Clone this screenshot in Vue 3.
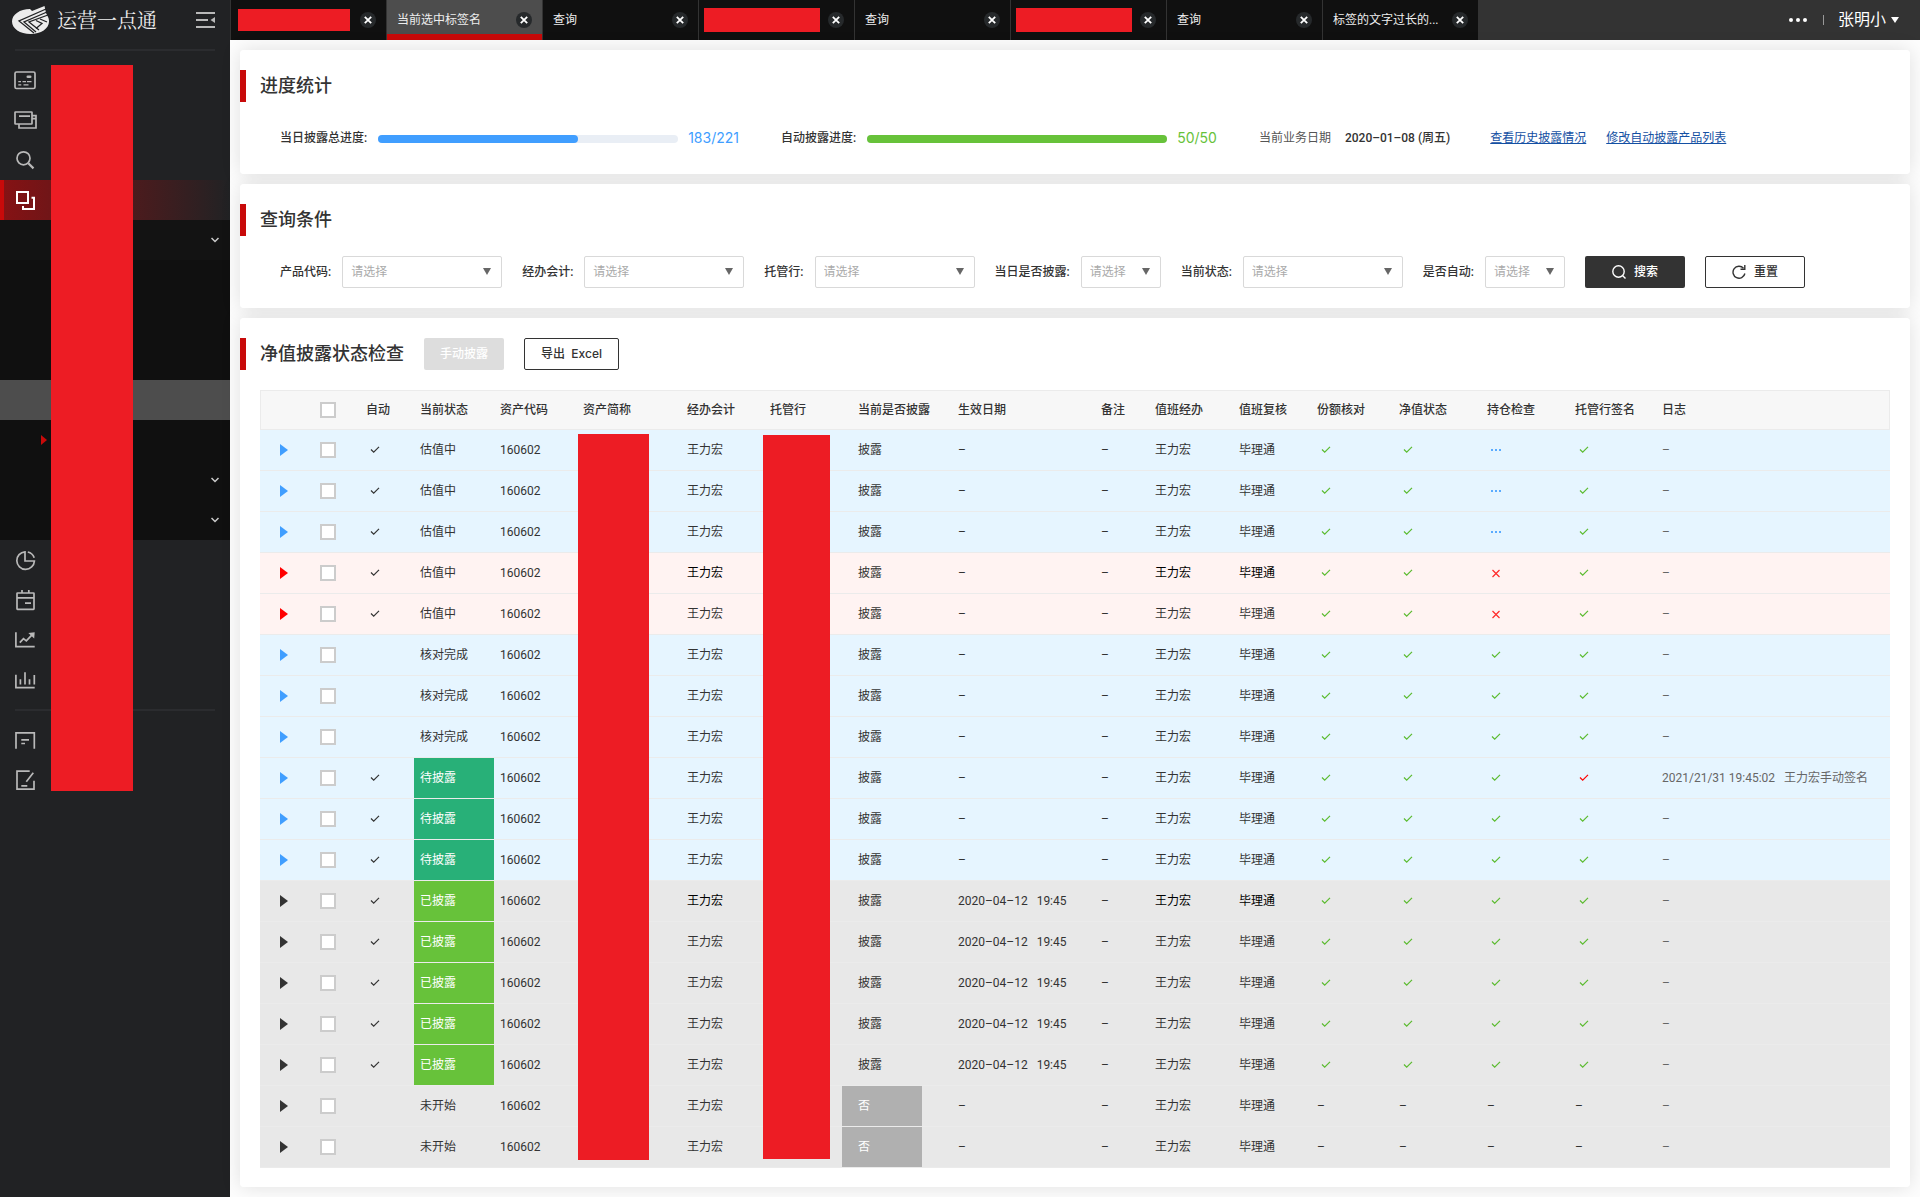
<script setup>
const tabs = [
  { redacted: 'w-first' },
  { label: '当前选中标签名', active: true },
  { label: '查询' },
  { redacted: 'w-wide' },
  { label: '查询' },
  { redacted: 'w-wide' },
  { label: '查询' },
  { label: '标签的文字过长的...' },
]

const filters = [
  { id: 'product', label: '产品代码:' },
  { id: 'accountant', label: '经办会计:' },
  { id: 'bank', label: '托管行:' },
  { id: 'disclosed', label: '当日是否披露:', short: true },
  { id: 'status', label: '当前状态:' },
  { id: 'auto', label: '是否自动:', short: true },
]

const checkColumns = ['share', 'nav', 'hold', 'sign']

function row(tone, status, extra = {}) {
  return {
    tone,
    status,
    auto: true,
    statusTone: '',
    strong: false,
    disclosed: '披露',
    date: '–',
    share: 'ok',
    nav: 'ok',
    hold: 'ok',
    sign: 'ok',
    log: '–',
    ...extra,
  }
}

const published = { statusTone: 'done', date: '2020–04–12\u00a0\u00a0\u00a019:45' }
const waiting = { statusTone: 'wait' }
const idle = { auto: false, disclosed: '否', share: 'none', nav: 'none', hold: 'none', sign: 'none' }

const rows = [
  row('blue', '估值中', { hold: 'pending' }),
  row('blue', '估值中', { hold: 'pending' }),
  row('blue', '估值中', { hold: 'pending' }),
  row('pink', '估值中', { hold: 'fail', strong: true }),
  row('pink', '估值中', { hold: 'fail' }),
  row('blue', '核对完成', { auto: false }),
  row('blue', '核对完成', { auto: false }),
  row('blue', '核对完成', { auto: false }),
  row('blue', '待披露', { ...waiting, sign: 'manual', log: '2021/21/31 19:45:02\u00a0\u00a0\u00a0王力宏手动签名' }),
  row('blue', '待披露', waiting),
  row('blue', '待披露', waiting),
  row('gray', '已披露', { ...published, strong: true }),
  row('gray', '已披露', published),
  row('gray', '已披露', published),
  row('gray', '已披露', published),
  row('gray', '已披露', published),
  row('gray', '未开始', idle),
  row('gray', '未开始', idle),
]
</script>

<template>
  <div class="app">
    <aside class="sidebar">
      <div class="brand">
        <svg class="logo" width="38" height="30" viewBox="0 0 38 30" aria-hidden="true">
          <path d="M18 4C8 4 0 9.500 0 16.500S8 29 18.500 29 37 23.500 37 16.500c0-2-.5-4-1.500-5.500L34 8 32.500 1 20 6z" fill="#ececec" />
          <g fill="none" stroke="#212224" stroke-width="1.300">
            <path d="M34 4L7 16l15 12" />
            <path d="M35 7L12 17l12 10" />
            <path d="M36 10L17 17l10 8" />
            <path d="M24 15.500l6 3-6 5M28 14l7 3" />
          </g>
        </svg>
        <span class="brand-name">运营一点通</span>
        <button class="collapse" type="button" aria-label="收起菜单">
          <svg width="20" height="16" viewBox="0 0 20 16">
            <path d="M0 1h19M0 8h12M0 15h19" fill="none" stroke="#b9b9b9" stroke-width="2" />
            <path d="M14.500 8l4.500-3v6z" fill="#b9b9b9" />
          </svg>
        </button>
      </div>
      <hr class="divider" />
      <nav class="menu">
        <a class="item" href="#" aria-label="卡片">
          <svg class="icon" viewBox="0 0 30 30">
            <rect x="5" y="7" width="20" height="16.500" rx="1.500" />
            <path d="M8.300 16.700H11M12.500 16.700H16M17 16.700h4.500M8.300 19.800h3M13.500 19.800h5" stroke-width="1.300" />
            <rect class="solid" x="16.500" y="10.500" width="5" height="2.600" rx="1.300" />
          </svg>
        </a>
        <a class="item" href="#" aria-label="窗口">
          <svg class="icon" viewBox="0 0 30 30">
            <rect x="5" y="7" width="17" height="12" rx=".5" />
            <path d="M9 11.200h11M9 19v4h17V10.700h-4M22 13.700h4" />
          </svg>
        </a>
        <a class="item" href="#" aria-label="搜索">
          <svg class="icon" viewBox="0 0 30 30">
            <circle cx="13.500" cy="13.300" r="6.500" />
            <path d="M18.300 18.200l5.200 5.200" stroke-width="2.200" />
          </svg>
        </a>
        <a class="item current" href="#" aria-label="业务">
          <svg class="icon" viewBox="0 0 30 30">
            <path d="M7 7h11v11H7zM21.500 12.700H24V24H13v-3" />
          </svg>
        </a>
        <div class="submenu">
          <a class="sub first" href="#" aria-label="分组一"><svg class="chevron" viewBox="0 0 8 6"><path d="M.5 1L4 4.500 7.500 1" /></svg></a>
          <a class="sub" href="#" aria-label="子项一"></a>
          <a class="sub" href="#" aria-label="子项二"></a>
          <a class="sub" href="#" aria-label="子项三"></a>
          <a class="sub selected" href="#" aria-label="子项四"></a>
          <a class="sub marked" href="#" aria-label="子项五"><svg class="marker" viewBox="0 0 6 10"><path d="M0 0l6 5-6 5z" /></svg></a>
          <a class="sub" href="#" aria-label="分组二"><svg class="chevron" viewBox="0 0 8 6"><path d="M.5 1L4 4.500 7.500 1" /></svg></a>
          <a class="sub" href="#" aria-label="分组三"><svg class="chevron" viewBox="0 0 8 6"><path d="M.5 1L4 4.500 7.500 1" /></svg></a>
        </div>
        <a class="item" href="#" aria-label="占比">
          <svg class="icon" viewBox="0 0 30 30">
            <path d="M15 6.800a8.800 8.800 0 1 0 9.400 9.200H15zM17.800 7a8.800 8.800 0 0 1 6.400 5.800" />
          </svg>
        </a>
        <a class="item" href="#" aria-label="日历">
          <svg class="icon" viewBox="0 0 30 30">
            <rect x="7" y="8" width="17" height="16.300" rx=".5" />
            <path d="M7 12.900h17M12 5v3M18.800 5v3M15 18.200h6" />
          </svg>
        </a>
        <a class="item" href="#" aria-label="趋势">
          <svg class="icon" viewBox="0 0 30 30">
            <path d="M5.900 7.300v14.400h18.800M9.800 17.700l3.700-4 2.800 2.200 6.200-6.600" />
            <path class="solid" d="M18.300 8l6.400-.8-.5 6.200z" />
          </svg>
        </a>
        <a class="item" href="#" aria-label="统计">
          <svg class="icon" viewBox="0 0 30 30">
            <path d="M5.900 9.700v13h18.800M24.300 10v9.500M10.400 14.300v5.200M15 7.300v12.200M19.500 14.300v5.200" />
          </svg>
        </a>
      </nav>
      <hr class="divider lower" />
      <nav class="menu-extra">
        <a class="item" href="#" aria-label="备注">
          <svg class="icon" viewBox="0 0 30 30">
            <path d="M6 23.700V7.900h18.300v15.800M11.300 14.800H19M11.300 18.500H15" />
          </svg>
        </a>
        <a class="item" href="#" aria-label="编辑">
          <svg class="icon" viewBox="0 0 30 30">
            <path d="M19.700 6.200H7v17.900h17v-8.400M23.300 7.800l-7 9M11.300 20.900h6" />
          </svg>
        </a>
      </nav>
      <div class="mask menu-mask"></div>
    </aside>

    <div class="content">
      <header class="topbar">
        <div v-for="(tab, i) in tabs" :key="i" class="tab" :class="{ active: tab.active }">
          <span v-if="tab.redacted" class="mask tab-mask" :class="tab.redacted"></span>
          <span v-else class="tab-label">{{ tab.label }}</span>
          <button class="close" type="button" aria-label="关闭">
            <svg width="8" height="8" viewBox="0 0 8 8"><path d="M.8.8l6.400 6.400M7.200.8L.8 7.200" stroke="#fff" stroke-width="1.800" /></svg>
          </button>
        </div>
        <div class="account">
          <button class="more" type="button" aria-label="更多">
            <svg width="18" height="4" viewBox="0 0 18 4" fill="#fff"><circle cx="2" cy="2" r="2" /><circle cx="9" cy="2" r="2" /><circle cx="16" cy="2" r="2" /></svg>
          </button>
          <span class="bar"></span>
          <button class="user" type="button">
            张明小
            <svg width="8" height="6" viewBox="0 0 8 6"><path d="M0 0h8L4 6z" fill="#fff" /></svg>
          </button>
        </div>
      </header>

      <main class="page">
        <section class="card">
          <div class="card-head"><h2>进度统计</h2></div>
          <div class="card-row">
            <div class="progress blue">
              <span class="label">当日披露总进度:</span>
              <span class="track"><span class="fill" :style="{ width: '66.67%' }"></span></span>
              <span class="count">183/221</span>
            </div>
            <div class="progress green">
              <span class="label">自动披露进度:</span>
              <span class="track"><span class="fill" :style="{ width: '100%' }"></span></span>
              <span class="count">50/50</span>
            </div>
            <div class="business-date">
              <span>当前业务日期</span>
              <strong>2020–01–08 (周五)</strong>
            </div>
            <div class="links">
              <a href="#">查看历史披露情况</a>
              <a href="#">修改自动披露产品列表</a>
            </div>
          </div>
        </section>

        <section class="card">
          <div class="card-head"><h2>查询条件</h2></div>
          <form class="card-row filters" @submit.prevent>
            <div v-for="f in filters" :key="f.id" class="field">
              <label class="label" :for="f.id">{{ f.label }}</label>
              <div class="select" :class="{ short: f.short }">
                <select :id="f.id"><option>请选择</option></select>
                <svg class="caret" width="8" height="7" viewBox="0 0 8 7"><path d="M0 0h8L4 7z" fill="#666" /></svg>
              </div>
            </div>
            <button class="btn dark" type="submit">
              <svg width="14" height="14" viewBox="0 0 14 14" fill="none" stroke="#fff" stroke-width="1.400"><circle cx="6.500" cy="6.500" r="5.700" /><path d="M10.500 10.500l3 3" /></svg>
              搜索
            </button>
            <button class="btn outline" type="reset">
              <svg width="14" height="14" viewBox="0 0 14 14" fill="none" stroke="#333" stroke-width="1.400"><path d="M11.500 3.200A6 6 0 1 0 12.900 8.500" /><path d="M8.500 4.200h4.300V0" /></svg>
              重置
            </button>
          </form>
        </section>

        <section class="card table-card">
          <div class="card-head">
            <h2>净值披露状态检查</h2>
            <button class="btn disabled" type="button" disabled>手动披露</button>
            <button class="btn outline export" type="button">导出&nbsp; Excel</button>
          </div>
          <div class="table-wrap">
            <table>
              <colgroup>
                <col class="c-expand" /><col class="c-pick" /><col class="c-auto" /><col class="c-status" />
                <col class="c-code" /><col class="c-name" /><col class="c-acct" /><col class="c-bank" />
                <col class="c-disclosed" /><col class="c-date" /><col class="c-note" /><col class="c-duty" />
                <col class="c-review" /><col class="c-share" /><col class="c-nav" /><col class="c-hold" />
                <col class="c-sign" /><col />
              </colgroup>
              <thead>
                <tr>
                  <th></th>
                  <th><input type="checkbox" aria-label="全选" /></th>
                  <th>自动</th>
                  <th>当前状态</th>
                  <th>资产代码</th>
                  <th>资产简称</th>
                  <th>经办会计</th>
                  <th>托管行</th>
                  <th class="disclosed">当前是否披露</th>
                  <th class="date">生效日期</th>
                  <th>备注</th>
                  <th>值班经办</th>
                  <th>值班复核</th>
                  <th>份额核对</th>
                  <th>净值状态</th>
                  <th>持仓检查</th>
                  <th>托管行签名</th>
                  <th>日志</th>
                </tr>
              </thead>
              <tbody>
                <tr v-for="(r, i) in rows" :key="i" :class="[r.tone, { strong: r.strong }]">
                  <td class="expand">
                    <button type="button" aria-label="展开"><svg width="8" height="12" viewBox="0 0 8 12"><path d="M0 0l8 6-8 6z" fill="currentColor" /></svg></button>
                  </td>
                  <td><input type="checkbox" aria-label="选择" /></td>
                  <td><svg v-if="r.auto" class="mark" viewBox="0 0 10 10"><path d="M1 4.500l2.700 2.700L9 1.800" stroke="#333" /></svg></td>
                  <td :class="r.statusTone">{{ r.status }}</td>
                  <td>160602</td>
                  <td></td>
                  <td class="person">王力宏</td>
                  <td></td>
                  <td class="disclosed" :class="{ no: r.disclosed === '否' }">{{ r.disclosed }}</td>
                  <td class="date">{{ r.date }}</td>
                  <td>–</td>
                  <td class="person">王力宏</td>
                  <td class="person">毕理通</td>
                  <td v-for="c in checkColumns" :key="c">
                    <svg v-if="r[c] === 'ok'" class="mark" viewBox="0 0 10 10"><path d="M1 4.500l2.700 2.700L9 1.800" stroke="#5bbb2f" /></svg>
                    <svg v-else-if="r[c] === 'manual'" class="mark" viewBox="0 0 10 10"><path d="M1 4.500l2.700 2.700L9 1.800" stroke="#f00" /></svg>
                    <svg v-else-if="r[c] === 'fail'" class="mark" viewBox="0 0 10 10"><path d="M1.500 2l7 7M8.500 2l-7 7" stroke="#ff2a2a" /></svg>
                    <svg v-else-if="r[c] === 'pending'" class="mark" viewBox="0 0 10 10"><path d="M0 5h2M4 5h2M8 5h2" stroke="#5aabff" stroke-width="2" /></svg>
                    <template v-else>–</template>
                  </td>
                  <td class="log">{{ r.log }}</td>
                </tr>
              </tbody>
            </table>
            <div class="mask name-mask"></div>
            <div class="mask bank-mask"></div>
          </div>
        </section>
      </main>
    </div>
  </div>
</template>

<style>
body {
  margin: 0;
  background: #fff;
}
</style>

<style scoped>
.app {
  display: flex;
  min-height: 100vh;
  color: #333;
  font: 12px/20px Roboto, "Noto Sans CJK SC", sans-serif;
}
* {
  box-sizing: border-box;
}
button {
  margin: 0;
  padding: 0;
  border: 0;
  background: none;
  color: inherit;
  font: inherit;
  cursor: pointer;
}
.mask {
  background: #ed1c24;
}

/* sidebar */
.sidebar {
  position: relative;
  flex: 0 0 230px;
  background: #212224;
}
.brand {
  display: flex;
  align-items: center;
  height: 49px;
  padding: 0 14px 9px 12px;
}
.logo {
  flex: none;
}
.brand-name {
  margin-left: 7px;
  color: #eee;
  font: 20px/30px "Noto Serif CJK SC", "Noto Sans CJK SC", serif;
}
.collapse {
  display: flex;
  margin-left: auto;
}
.divider {
  height: 2px;
  margin: 0 15px 9px;
  border: 0;
  background: #2b2c2f;
}
.divider.lower {
  margin-top: 9px;
}
.item {
  display: flex;
  align-items: center;
  height: 40px;
  padding-left: 10px;
}
.item.current {
  padding-left: 6px;
  border-left: 4px solid #c80a0a;
  background: linear-gradient(90deg, #851214, #212224);
}
.icon {
  width: 30px;
  height: 30px;
  fill: none;
  stroke: #b9b9b9;
  stroke-width: 1.700;
}
.icon .solid {
  fill: #b9b9b9;
  stroke: none;
}
.current .icon {
  stroke: #fff;
  stroke-width: 2;
}
.submenu {
  background: #101010;
}
.sub {
  display: flex;
  align-items: center;
  justify-content: flex-end;
  height: 40px;
  padding-right: 11px;
}
.sub.first {
  background: #131313;
}
.sub.selected {
  background: #4d4d4d;
}
.sub.marked {
  justify-content: flex-start;
  padding-left: 41px;
}
.chevron {
  width: 8px;
  height: 6px;
  fill: none;
  stroke: #ccc;
  stroke-width: 1.500;
}
.marker {
  width: 6px;
  height: 10px;
  fill: #c80a0a;
}
.menu-mask {
  position: absolute;
  top: 65px;
  left: 51px;
  width: 82px;
  height: 726px;
}

/* top bar */
.content {
  flex: 1;
  min-width: 0;
}
.topbar {
  display: flex;
  height: 40px;
  background: #333;
}
.tab {
  display: flex;
  align-items: center;
  justify-content: space-between;
  width: 156px;
  padding: 0 10px;
  border-left: 1px solid #333;
  background: #101010;
  color: #eee;
}
.tab.active {
  background: #4d4d4d;
  box-shadow: inset 0 -6px #c80a0a;
}
.tab-label {
  white-space: nowrap;
}
.tab-mask {
  height: 22px;
  margin-left: -3px;
}
.w-first {
  width: 112px;
}
.w-wide {
  width: 116px;
  height: 24px;
  margin-left: -5px;
}
.close {
  display: flex;
  align-items: center;
  justify-content: center;
  flex: none;
  width: 16px;
  height: 16px;
  border-radius: 8px;
  background: #26292b;
}
.account {
  display: flex;
  align-items: center;
  margin-left: auto;
  padding-right: 21px;
  color: #fff;
}
.more {
  display: flex;
}
.bar {
  width: 1px;
  height: 10px;
  margin: 0 14px 0 16px;
  background: #999;
}
.user {
  display: flex;
  align-items: center;
  gap: 5px;
  font-size: 16px;
}

/* cards */
.page {
  display: flex;
  flex-direction: column;
  gap: 10px;
  padding: 10px;
  background: #fdfdfd;
  isolation: isolate;
}
.card {
  position: relative;
  padding: 20px 0;
  border-radius: 4px;
  background: #fff;
}
/* the shadow lies under every card, so it never tints a neighbour */
.card::before {
  content: "";
  position: absolute;
  inset: 0;
  z-index: -1;
  border-radius: 4px;
  box-shadow: 0 0 20px rgba(0, 0, 0, 0.12);
}
.table-card {
  padding-bottom: 19px;
}
.card-head {
  display: flex;
  align-items: center;
  gap: 20px;
  height: 32px;
  padding-left: 14px;
  border-left: 6px solid #c80a0a;
}
h2 {
  margin: 0;
  font-size: 18px;
  font-weight: 500;
}
.card-row {
  display: flex;
  align-items: center;
  height: 32px;
  margin-top: 20px;
  padding: 0 20px 0 40px;
  white-space: nowrap;
}
.label {
  font-weight: 500;
}
.progress {
  display: flex;
  align-items: center;
  margin-right: 42px;
}
.track {
  width: 300px;
  height: 8px;
  margin: 2px 10px 0 11px;
  border-radius: 4px;
  background: #e9eef5;
}
.fill {
  display: block;
  height: 8px;
  border-radius: 4px;
}
.blue .fill {
  background: #409eff;
}
.green .fill {
  background: #67c23a;
}
.count {
  font-family: Inter, sans-serif;
  font-size: 14px;
}
.blue .count {
  color: #409eff;
}
.green .count {
  color: #67c23a;
}
.business-date {
  display: flex;
  gap: 14px;
  color: #555;
}
.business-date strong {
  color: #333;
  font-weight: 500;
}
.links {
  display: flex;
  gap: 20px;
  margin-left: 40px;
}
.links a {
  color: #1450a3;
}
.filters {
  gap: 20px;
}
.field {
  display: flex;
  align-items: center;
  gap: 11px;
}
.select {
  position: relative;
  width: 160px;
}
.select.short {
  width: 80px;
}
select {
  display: block;
  width: 100%;
  height: 32px;
  padding: 0 8px;
  border: 1px solid #d9d9d9;
  border-radius: 2px;
  background: #fff;
  color: #aaa;
  font: inherit;
  appearance: none;
}
.caret {
  position: absolute;
  top: 12px;
  right: 11px;
  pointer-events: none;
}
.btn {
  display: flex;
  align-items: center;
  justify-content: center;
  gap: 8px;
  width: 100px;
  height: 32px;
  border-radius: 2px;
  font-weight: 500;
}
.dark {
  background: #333;
  color: #fff;
}
.outline {
  border: 1px solid #333;
}
.disabled {
  width: 80px;
  background: #ddd;
  color: #fff;
}
.export {
  width: 95px;
  font-family: Inter, "Noto Sans CJK SC", sans-serif;
}

/* table */
.table-wrap {
  position: relative;
  margin: 20px 20px 0;
}
table {
  width: 100%;
  border-spacing: 0;
  table-layout: fixed;
}
.c-expand,
.c-auto,
.c-note {
  width: 54px;
}
.c-pick {
  width: 46px;
}
.c-status,
.c-disclosed {
  width: 80px;
}
.c-code,
.c-acct {
  width: 83px;
}
.c-name {
  width: 104px;
}
.c-bank,
.c-review {
  width: 78px;
}
.c-date {
  width: 173px;
}
.c-duty {
  width: 84px;
}
.c-share {
  width: 82px;
}
.c-nav,
.c-hold {
  width: 88px;
}
.c-sign {
  width: 87px;
}
th,
td {
  padding: 0 0 0 6px;
  border-bottom: 1px solid #ebebeb;
  text-align: left;
  white-space: nowrap;
}
th {
  height: 40px;
  border-top: 1px solid #ebebeb;
  background: #f7f7f7;
  font-weight: 500;
}
th:first-child {
  border-left: 1px solid #ebebeb;
}
th:last-child {
  border-right: 1px solid #ebebeb;
}
td {
  height: 41px;
}
th.disclosed,
td.disclosed {
  padding-left: 16px;
}
th.date,
td.date {
  padding-left: 36px;
}
tr.blue {
  background: #e6f5ff;
}
tr.pink {
  background: #fff3f2;
}
tr.gray {
  background: #e8e8e8;
}
td.expand {
  padding-left: 20px;
  color: #333;
}
.blue td.expand {
  color: #409eff;
}
.pink td.expand {
  color: #f00;
}
.expand button {
  display: flex;
}
.strong .person {
  color: #000;
}
td.wait,
td.done,
td.no {
  background-clip: padding-box;
  color: #fff;
}
td.wait {
  background-color: #28b078;
}
td.done {
  background-color: #67c23a;
}
td.no {
  background-color: #b0b0b0;
}
td.log {
  color: #666;
}
input[type="checkbox"] {
  display: block;
  width: 16px;
  height: 16px;
  margin: 0;
  border: 2px solid #ccc;
  background: #fff;
  appearance: none;
}
.mark {
  display: block;
  width: 10px;
  height: 10px;
  margin-left: 4px;
  fill: none;
  stroke-width: 1.200;
}
.name-mask,
.bank-mask {
  position: absolute;
  top: 44px;
  bottom: 8px;
  left: 318px;
  width: 71px;
}
.bank-mask {
  top: 45px;
  bottom: 9px;
  left: 503px;
  width: 67px;
}
</style>
